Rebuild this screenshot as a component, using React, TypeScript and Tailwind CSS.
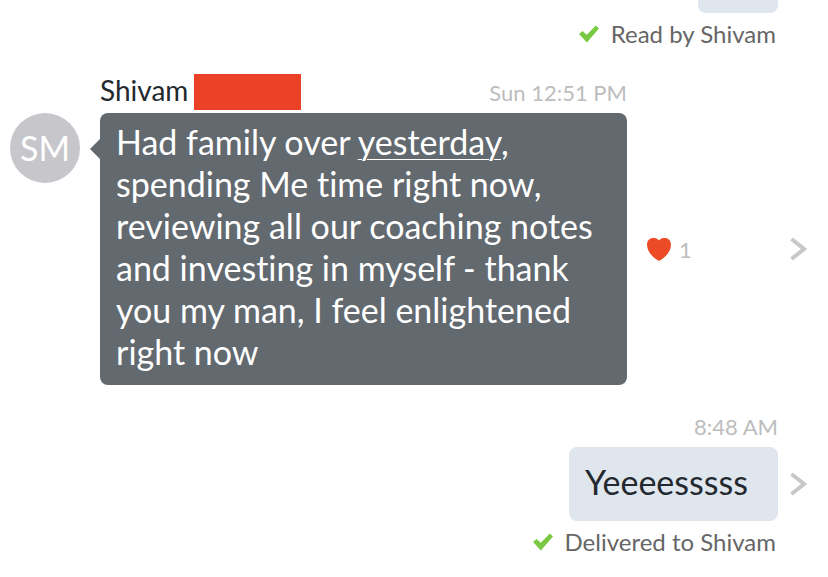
import type { ReactNode } from "react";

type StatusProps = {
  children: ReactNode;
};

function CheckIcon() {
  return (
    <svg viewBox="0 0 20 18" className="h-[18px] w-5 shrink-0" aria-hidden="true">
      <path d="M0 9 3.5 6 7.8 9.8 16.8.4 20 3.4 7.9 17.4Z" fill="#7ac943" />
    </svg>
  );
}

function HeartIcon() {
  return (
    <svg viewBox="0 0 24 23" className="h-[23px] w-6 shrink-0" aria-hidden="true">
      <path
        d="M12 2.4C10.4.6 8.4.1 6.4.1 2.7.1 0 2.8 0 6.8 0 13.8 5.8 19.5 12 23 18.2 19.5 24 13.8 24 6.8 24 2.8 21.3.1 17.6.1 15.6.1 13.6.6 12 2.4Z"
        fill="#ec4b26"
      />
    </svg>
  );
}

function DetailsButton() {
  return (
    <button type="button" aria-label="Message details" className="shrink-0">
      <svg viewBox="0 0 17 24" className="h-6 w-[17px]" aria-hidden="true">
        <path d="M1.5 2 14 12 1.5 22" fill="none" stroke="#c8c8c8" strokeWidth="4" />
      </svg>
    </button>
  );
}

function Status({ children }: StatusProps) {
  return (
    <p className="flex h-[42px] items-center justify-end gap-3 pr-[52px] text-2xl text-[#666666]">
      <CheckIcon />
      {children}
    </p>
  );
}

export default function App() {
  return (
    <main className="min-h-screen overflow-hidden bg-white pb-3 font-['Lato',sans-serif] text-[#23292e] [font-variant-ligatures:none]">
      <div className="flex justify-end pr-[50px]">
        <div className="h-[13px] w-20 rounded-b-lg bg-[#e0e6ee]" />
      </div>
      <Status>Read by Shivam</Status>

      <article className="mt-[19px] pl-[10px] pr-[21px]">
        <header className="ml-[90px] flex h-9 max-w-[527px] items-center justify-between">
          <h2 className="flex h-9 gap-[6px] text-[28px] leading-8">
            Shivam
            <span className="h-9 w-[107px] bg-[#ea4127]" />
          </h2>
          <time className="text-[22px] text-[#bdbdbd]">Sun 12:51 PM</time>
        </header>

        <div className="mt-[3px] flex items-center">
          <div className="flex size-[70px] shrink-0 items-center justify-center self-start rounded-full bg-[#c7c6cb] text-[34px] leading-[42px] text-white">
            SM
          </div>
          <div className="relative ml-5 w-full max-w-[527px] rounded-lg bg-[#62696f] pt-2 pr-4 pb-3 pl-4">
            <svg viewBox="0 0 10 20" className="absolute -left-[10px] top-[26px] h-5 w-[10px]" aria-hidden="true">
              <path d="M10 0 0 10 10 20Z" fill="#62696f" />
            </svg>
            <p className="text-[34px] leading-[42px] text-white">
              Had family over{" "}
              <span className="underline decoration-1 underline-offset-4">yesterday</span>, spending Me time right now,
              reviewing all our coaching notes and investing in myself - thank you my man, I feel enlightened right now
            </p>
          </div>
          <button type="button" aria-label="1 like" className="ml-5 flex items-center gap-2 text-[22px] text-[#bdbdbd]">
            <HeartIcon />1
          </button>
          <div className="ml-auto flex">
            <DetailsButton />
          </div>
        </div>
      </article>

      <article className="mt-[23px]">
        <header className="flex h-9 items-center justify-end pr-[50px]">
          <time className="text-[22px] text-[#bdbdbd]">8:48 AM</time>
        </header>
        <div className="mt-[3px] flex items-center justify-end gap-3 pr-[21px]">
          <p className="min-w-[209px] rounded-lg bg-[#e0e6ee] pt-[14px] pr-5 pb-[18px] pl-4 text-[34px] leading-[42px]">
            Yeeeesssss
          </p>
          <DetailsButton />
        </div>
        <Status>Delivered to Shivam</Status>
      </article>
    </main>
  );
}
